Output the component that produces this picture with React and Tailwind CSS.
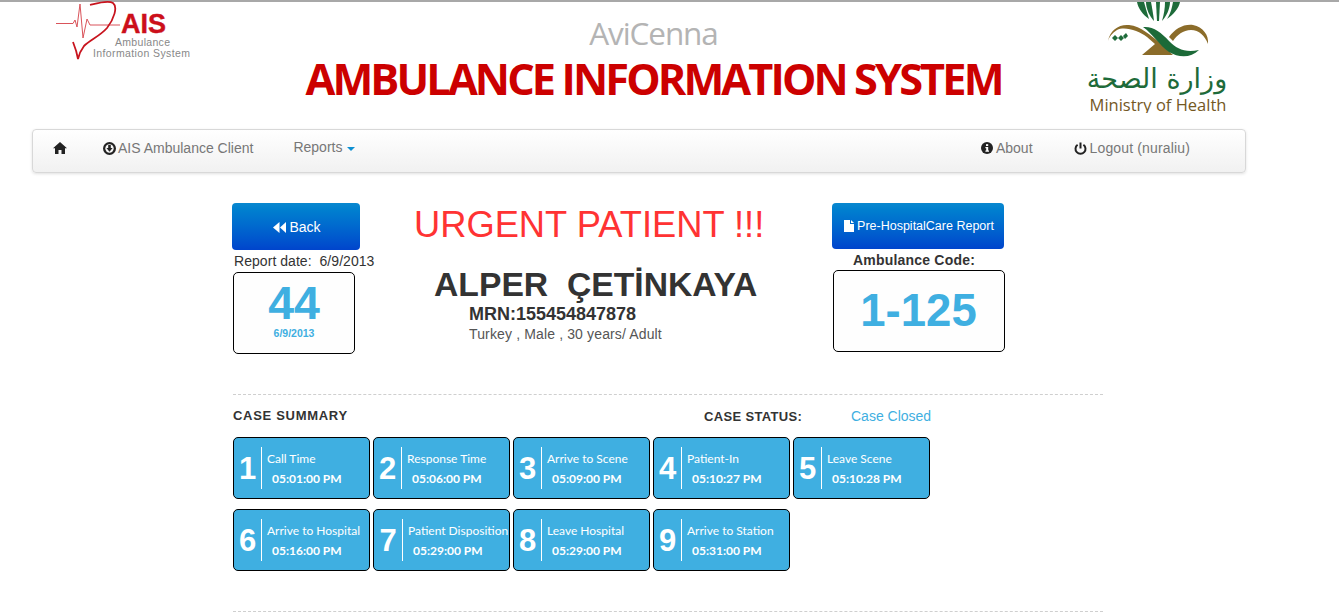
import React from "react";

const sans = "font-['Liberation_Sans',Arial,sans-serif]";

const row1 = [
  ["1", "Call Time", "05:01:00 PM"],
  ["2", "Response Time", "05:06:00 PM"],
  ["3", "Arrive to Scene", "05:09:00 PM"],
  ["4", "Patient-In", "05:10:27 PM"],
  ["5", "Leave Scene", "05:10:28 PM"],
];
const row2 = [
  ["6", "Arrive to Hospital", "05:16:00 PM"],
  ["7", "Patient Disposition", "05:29:00 PM"],
  ["8", "Leave Hospital", "05:29:00 PM"],
  ["9", "Arrive to Station", "05:31:00 PM"],
];

function Card({ n, label, time }) {
  const wide = n === "7";
  return (
    <div className="flex h-[62px] w-[137px] shrink-0 items-center rounded-[5px] border border-black bg-[#3fafe1] text-white">
      <div className={`flex justify-center font-['Liberation_Sans',Arial,sans-serif] text-[31px] leading-none font-bold ${wide ? "w-[28px]" : "w-[27px]"}`}>{n}</div>
      <div className="h-[42px] w-px bg-white" />
      <div className="mt-[1px] flex min-w-0 flex-col pl-[5px] font-['Lato',sans-serif] whitespace-nowrap">
        <div className="text-[12px] leading-[16px]">{label}</div>
        <div className="mt-[4px] pl-[5px] text-[12px] leading-[16px] font-bold">{time}</div>
      </div>
    </div>
  );
}

function AisLogo() {
  return (
    <svg width="140" height="64" viewBox="0 0 140 64" className="block">
      <path d="M0 22.5 H17 L19 19 L21 26 L24 3 L27 37 L31 18 L34 24 H64" fill="none" stroke="#d9535a" strokeWidth="1" />
      <path d="M34 4 C42 2 52 -1 57 2 C62 6 58 18 51 27 C44 35 34 39 28 45 C25 49 23 53 22 58 C21 52 19 46 17 41" fill="none" stroke="#c8141e" strokeWidth="1.8" />
      <text x="65" y="32" fontFamily="Liberation Sans" fontWeight="700" fontSize="27" fill="#cc0f1a" stroke="#cc0f1a" strokeWidth="0.4" textLength="45">AIS</text>
      <text x="59" y="45" fontFamily="Liberation Sans" fontSize="10.5" fill="#888" textLength="55">Ambulance</text>
      <text x="37" y="56" fontFamily="Liberation Sans" fontSize="10.5" fill="#888" textLength="97">Information System</text>
    </svg>
  );
}

function MohLogo() {
  return (
    <svg width="142" height="113" viewBox="0 0 142 113" className="block">
      <g fill="#1e6b3a">
        <path d="M50 2 C51 8 56 15 62 19 C60 12 58 6 57 2Z" />
        <path d="M59 2 C59 9 63 17 67 21 C66 13 65 7 64 2Z" />
        <path d="M69 2 H73 L72 21 H70Z" />
        <path d="M78 2 C78 8 77 14 75 21 C79 17 83 9 83 2Z" />
        <path d="M86 2 C85 7 84 13 80 19 C86 15 92 8 93 2Z" />
      </g>
      <path d="M21 41 C23 30 32 24 42 25 C54 26 64 36 72 42 L86 55 H55 L68 44 L60 37 C52 31 38 26 30 30 C25 33 22 37 21 41Z" fill="#8b6c2a" />
      <path d="M56 27 C66 26 74 32 82 41 C90 49 98 53 112 50 C104 58 92 58 82 52 C72 45 66 34 56 27Z" fill="#1c6a38" />
      <path d="M82 37 C88 29 96 24 106 25 C116 27 122 35 121 44 C118 36 112 30 104 30 C96 30 90 35 86 41Z" fill="#8b6c2a" />
      <g fill="#1e6b3a">
        <path d="M25 38 L28 35 L31 38 L28 41Z" />
        <path d="M31 38 L34 35 L37 38 L34 41Z" />
        <path d="M36 36 L39 33 L41 36 L38 39Z" />
      </g>
      <text x="70" y="88" textAnchor="middle" fontFamily="DejaVu Sans" fontSize="27" fill="#1e6b3a" direction="rtl">وزارة الصحة</text>
      <text x="71" y="111" textAnchor="middle" fontFamily="Open Sans" fontSize="16.5" fill="#74581f">Ministry of Health</text>
    </svg>
  );
}

function Home() {
  return (
    <svg width="14" height="12" viewBox="0 0 14 12" fill="#222"><path d="M7 0 L14 6.2 H12 V12 H8.5 V8 H5.5 V12 H2 V6.2 H0Z" /></svg>
  );
}
function DownCircle() {
  return (
    <svg width="13" height="13" viewBox="0 0 13 13"><circle cx="6.5" cy="6.5" r="6.5" fill="#222" /><circle cx="6.5" cy="6.5" r="4.2" fill="#f7f7f7" /><path d="M5.2 3 H7.8 V6 H9.6 L6.5 9.8 L3.4 6 H5.2Z" fill="#222" /></svg>
  );
}
function Info() {
  return (
    <svg width="12" height="12" viewBox="0 0 12 12"><circle cx="6" cy="6" r="6" fill="#222" /><rect x="5" y="2.2" width="2.2" height="1.8" fill="#fff" /><path d="M4.4 5 H7.2 V8.6 H8 V9.8 H4.4 V8.6 H5.2 V6.2 H4.4Z" fill="#fff" /></svg>
  );
}
function Power() {
  return (
    <svg width="13" height="13" viewBox="0 0 13 13" fill="none" stroke="#222" strokeWidth="2"><path d="M3.6 2.8 A5 5 0 1 0 9.4 2.8" /><path d="M6.5 0.5 V6.5" /></svg>
  );
}

const navLink = "flex items-center gap-[2px] text-[14px] text-[#777]";
const navLinkRight = "flex items-center gap-[3px] text-[14px] text-[#777]";

export default function App() {
  return (
    <div className={`min-h-[613px] overflow-hidden bg-white ${sans}`}>
      <div className="h-[2px] bg-[#a8a8a8]" />
      <header className="flex h-[127px] items-start">
        <div className="mt-[-1px] ml-[56px] w-[140px] shrink-0"><AisLogo /></div>
        <div className="ml-[109px] flex w-[697px] shrink-0 flex-col items-center">
          <div className="mt-[13px] font-['Open_Sans',sans-serif] text-[31.5px] leading-[36px] tracking-[-1.1px] text-[#b4b4b4]">AviCenna</div>
          <div className="mt-[2px] font-['Open_Sans',sans-serif] text-[43.3px] leading-[52px] font-bold tracking-[-2.9px] whitespace-nowrap text-[#cc0000]">AMBULANCE INFORMATION SYSTEM</div>
        </div>
        <div className="mt-[-2px] ml-[85px] w-[142px] shrink-0"><MohLogo /></div>
      </header>

      <nav className="ml-[32px] flex h-[44px] w-[1214px] items-center rounded-[4px] border border-[#d8d8d8] bg-gradient-to-b from-white to-[#f1f1f1] pb-[6px] shadow-[0_1px_3px_rgba(0,0,0,0.12)]">
        <div className="ml-[20px] flex w-[14px]"><Home /></div>
        <div className={`ml-[36px] ${navLink}`}><DownCircle /><span>AIS Ambulance Client</span></div>
        <div className={`mt-[-2px] ml-[40px] ${navLink}`}>
          <span>Reports</span>
          <span className="mt-[3px] ml-[3px] h-0 w-0 border-x-[4px] border-t-[4px] border-x-transparent border-t-[#0e90d2]" />
        </div>
        <div className={`ml-auto ${navLinkRight}`}><Info /><span>About</span></div>
        <div className={`mr-[55px] ml-[41px] ${navLinkRight}`}><Power /><span className="tracking-[0.15px]">Logout (nuraliu)</span></div>
      </nav>

      <main className="mt-[30px] ml-[233px] w-[870px]">
        <section className="flex h-[192px] border-b border-dashed border-[#cfcfcf]">
          <div className="flex w-[181px] shrink-0 flex-col items-start">
            <div className="ml-[-1px] flex h-[47px] w-[128px] items-center justify-center gap-[3px] rounded-[4px] bg-gradient-to-b from-[#0a88cf] to-[#0044cc] pt-[2px] pl-[2px] text-[14px] text-white">
              <svg width="13" height="11" viewBox="0 0 13 11" fill="#fff"><path d="M6.5 0 V11 L0 5.5Z" /><path d="M13 0 V11 L7 5.5Z" /></svg>
              <span>Back</span>
            </div>
            <div className="mt-[1px] ml-[1px] text-[14px] leading-[20px] tracking-[0.05px] whitespace-pre text-[#333]">Report date:  6/9/2013</div>
            <div className="mt-[1px] flex h-[82px] w-[122px] flex-col items-center rounded-[5px] border border-black bg-[#fefefe] text-[#3fafe1]">
              <div className="mt-[7px] text-[46.5px] leading-[47px] font-bold">44</div>
              <div className="mt-0 text-[10.5px] leading-[12px] font-bold">6/9/2013</div>
            </div>
          </div>

          <div className="w-[418px] shrink-0">
            <div className="text-[36.3px] leading-[44px] whitespace-nowrap text-[#ff3333]">URGENT PATIENT !!!</div>
            <div className="mt-[17px] ml-[20px] text-[33.7px] leading-[40px] font-bold whitespace-pre text-[#333]">ALPER  ÇETİNKAYA</div>
            <div className="mt-[-1px] ml-[55px] text-[18px] leading-[22px] font-bold text-[#333]">MRN:155454847878</div>
            <div className="mt-[-1px] ml-[55px] text-[14px] leading-[20px] tracking-[0.14px] text-[#555]">Turkey , Male , 30 years/ Adult</div>
          </div>

          <div className="flex w-[172px] shrink-0 flex-col items-start">
            <div className="flex h-[46px] w-[172px] items-center justify-center gap-[3px] rounded-[4px] bg-gradient-to-b from-[#0a88cf] to-[#0044cc] pl-[2px] text-[12.5px] text-white">
              <svg width="10" height="12" viewBox="0 0 10 12" fill="#fff"><path d="M0 0 H6 V4 H10 V12 H0Z" /><path d="M7 0 L10 3 H7Z" /></svg>
              <span>Pre-HospitalCare Report</span>
            </div>
            <div className="mt-[1px] ml-[21px] text-[14px] leading-[20px] font-bold tracking-[0.2px] text-[#333]">Ambulance Code:</div>
            <div className="ml-[1px] flex h-[82px] w-[172px] items-center justify-center rounded-[5px] border border-black bg-[#fefefe] pr-[1px] text-[45.5px] font-bold text-[#3fafe1]">1-125</div>
          </div>
        </section>

        <section className="h-[217px] border-b border-dashed border-[#cfcfcf]">
          <div className="flex h-[42px] items-center text-[13px] leading-[20px]">
            <div className="w-[471px] font-bold tracking-[0.7px] text-[#333]">CASE SUMMARY</div>
            <div className="mt-[2px] w-[147px] font-bold tracking-[0.33px] text-[#333]">CASE STATUS:</div>
            <div className="text-[14px] text-[#3fafe1]">Case Closed</div>
          </div>
          <div className="flex gap-[3px]">
            {row1.map(([n, l, t]) => <Card key={n} n={n} label={l} time={t} />)}
          </div>
          <div className="mt-[10px] flex gap-[3px]">
            {row2.map(([n, l, t]) => <Card key={n} n={n} label={l} time={t} />)}
          </div>
        </section>
      </main>
    </div>
  );
}
